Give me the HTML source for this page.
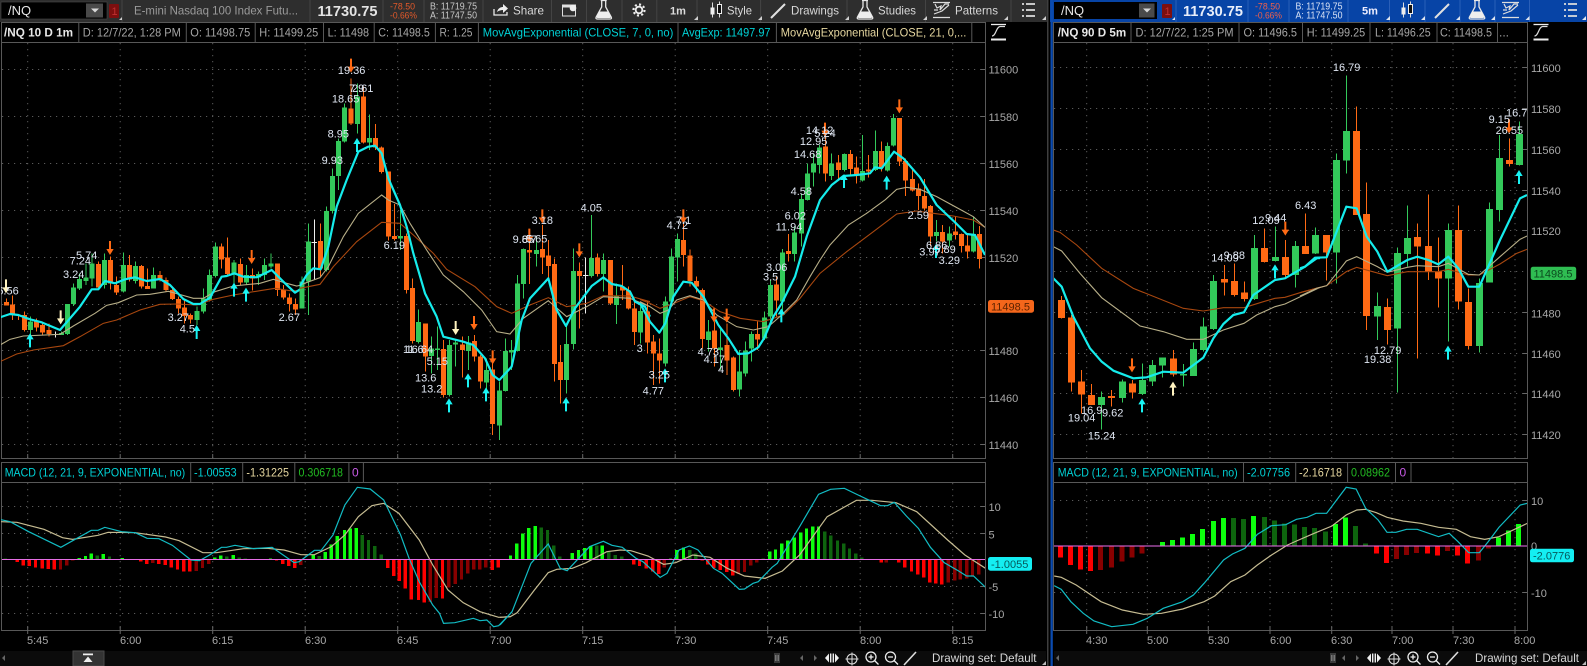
<!DOCTYPE html>
<html><head><meta charset="utf-8"><title>/NQ</title>
<style>
html,body{margin:0;padding:0;background:#000;width:1587px;height:666px;overflow:hidden}
svg{display:block;font-family:"Liberation Sans",sans-serif}
.n path,.n polyline{vector-effect:non-scaling-stroke;fill:none}
.w{stroke-width:1}.b5{stroke-width:5}.b7{stroke-width:7}
.g{stroke:#33c95a;shape-rendering:crispEdges}.o{stroke:#ff6a14;shape-rendering:crispEdges}
.h{shape-rendering:crispEdges}
.c{stroke:#15ecec;stroke-width:2.2;stroke-linejoin:round}
.t{stroke:#b8af88;stroke-width:1.1}.r{stroke:#a8470f;stroke-width:1.1}
.mc{stroke:#12bcc4;stroke-width:1.2}.mt{stroke:#c6bc92;stroke-width:1.2}
.lab{font-size:33px;fill:#dfe6f2;text-anchor:middle;dominant-baseline:central}
.ax{font-size:11px;fill:#a8a8a8}
.hd{font-size:12px;fill:#a6a6a6}
.tw{font-size:12px;fill:#d8d8d8}
</style></head><body>
<svg width="1587" height="666" viewBox="0 0 1587 666" xmlns="http://www.w3.org/2000/svg">
<defs>
<clipPath id="cl"><rect x="1" y="43" width="984" height="415"/></clipPath>
<clipPath id="cr"><rect x="1054" y="43" width="473" height="415"/></clipPath>
<clipPath id="ml"><rect x="1" y="483" width="984" height="147"/></clipPath>
<clipPath id="mr"><rect x="1054" y="483" width="473" height="147"/></clipPath>
<path id="u" d="M0 0l11 18h-8v24h-6v-24h-8z"/>
<path id="d" d="M0 0l-11-18h8v-24h6v24h8z"/>
<g id="fl"><path d="M-3-9.5h6M-2-9v6l-5.5 10q-.8 2 1 2h13q1.800 0 1-2l-5.500-10v-6" fill="none" stroke="#e8e8e8" stroke-width="1.300"/><path d="M-4.500 1.500h9l2.500 5q.3 1.500-1 1.500h-12q-1.300 0-1-1.500z" fill="#eee"/></g>
<g id="cd"><path d="M-3.500-8v15M3.500-9v16" stroke="#ddd" fill="none"/><rect x="-5.500" y="-3" width="4" height="7" fill="#eee"/><rect x="1.500" y="-6" width="4" height="9" fill="#111" stroke="#eee"/></g>
<g id="ln"><path d="M-7 7L7-7" stroke="#e0e0e0" stroke-width="2" fill="none"/></g>
<g id="pt"><path d="M-9-7.500h17M-7-6l2 4 4-2-1 4 5-6 4 0M-8 0l4 0M-8 4l8-3 7-6M-9 7.500h17" stroke="#ddd" stroke-width="1.200" fill="none"/></g>
<g id="li"><path d="M-6-6h2M-6 0h2M-6 6h2M-2-6h9M-2 0h9M-2 6h9" stroke="#ddd" stroke-width="1.800" fill="none"/></g>
<g id="ic"><path d="M-7.500-5.500h15" stroke="#eee" stroke-width="1.300" fill="none"/><path d="M-7.500 9.500h15" stroke="#eee" stroke-width="2" fill="none"/><path d="M-6.500 6c4 0 4-9 8-9.500h5" stroke="#ddd" stroke-width="1.200" fill="none"/></g>
<g id="bi"><path d="M-7 0l4-4.500v9zM7 0l-4-4.500v9z" fill="#eee"/><path d="M-1.300-4.500v9M1.300-4.500v9" stroke="#eee" stroke-width="1.400" fill="none"/><circle cx="20" cy="1" r="5" fill="none" stroke="#ddd" stroke-width="1.100"/><path d="M13.500 1h13M20-5.500v13" stroke="#ddd" fill="none"/><circle cx="39" cy="-1" r="5" fill="none" stroke="#eee" stroke-width="1.300"/><path d="M36.500-1h5M39-3.500v5M42.500 2.500l4 4" stroke="#eee" stroke-width="1.300" fill="none"/><circle cx="58.500" cy="-1" r="5" fill="none" stroke="#eee" stroke-width="1.300"/><path d="M56-1h5M62 2.500l4 4" stroke="#eee" stroke-width="1.300" fill="none"/><path d="M72 7L84-6" stroke="#ddd" stroke-width="1.600" fill="none"/></g>
</defs>

<rect width="1587" height="666" fill="#000"/>

<!-- left toolbar -->
<rect x="0" y="0" width="1047" height="22" fill="#2e2e2e"/>
<rect x="1" y="2" width="106" height="17" fill="#000" stroke="#4a4a4a" stroke-width=".6"/>
<rect x="86" y="3.500" width="17" height="14" fill="#4a4a4a"/>
<path d="M91 8.500h8l-4 4z" fill="#d8d8d8"/>
<text x="8" y="15" font-size="13" fill="#e8e8e8">/NQ</text>
<rect x="109" y="4" width="10" height="14" rx="1" fill="#7d0f0f"/>
<text x="111.500" y="15" font-size="11" fill="#c03030">1</text>
<path d="M122 0v22M310 0v22M383 0v22M424 0v22M483 0v22M551.500 0v22M586.500 0v22M622 0v22M656.800 0v22M697 0v22M760.600 0v22M847 0v22M925.500 0v22M1011 0v22" stroke="#444" fill="none"/>
<text x="134" y="14.500" font-size="12" fill="#9a9a9a" textLength="164" lengthAdjust="spacingAndGlyphs">E-mini Nasdaq 100 Index Futu...</text>
<text x="317.500" y="16" font-size="15" font-weight="bold" fill="#e4e4e4" textLength="60" lengthAdjust="spacingAndGlyphs">11730.75</text>
<text x="390" y="9.500" font-size="9.500" fill="#e2592a" textLength="25" lengthAdjust="spacingAndGlyphs">-78.50</text>
<text x="390" y="18.500" font-size="9.500" fill="#e2592a" textLength="27" lengthAdjust="spacingAndGlyphs">-0.66%</text>
<text x="430" y="9.500" font-size="10" fill="#c8c8c8" textLength="47" lengthAdjust="spacingAndGlyphs">B: 11719.75</text>
<text x="430" y="18.500" font-size="10" fill="#c8c8c8" textLength="47" lengthAdjust="spacingAndGlyphs">A: 11747.50</text>
<path d="M494 9v6h13v-3" stroke="#e8e8e8" stroke-width="1.300" fill="none"/><path d="M497 12c1-4 4-5 6-5V4l5 4.500-5 4.500v-3c-2 0-4 .5-6 2z" fill="#eee"/>
<text x="513" y="14.500" class="tw" textLength="31" lengthAdjust="spacingAndGlyphs">Share</text>
<rect x="562.500" y="5" width="13" height="11" fill="none" stroke="#e0e0e0"/><rect x="562.500" y="5" width="13" height="2.500" fill="#e0e0e0"/><circle cx="573" cy="8" r="3.300" fill="#eee"/>
<use href="#fl" x="603.700" y="10"/>
<circle cx="639" cy="10" r="5.500" fill="none" stroke="#eee" stroke-width="2.200" stroke-dasharray="2 2.300"/><circle cx="639" cy="10" r="3.300" fill="none" stroke="#eee" stroke-width="1.800"/>
<text x="670" y="14.500" font-size="11" font-weight="bold" fill="#ddd">1m</text>
<use href="#cd" x="716" y="10.500"/>
<text x="727" y="14.500" class="tw" textLength="25" lengthAdjust="spacingAndGlyphs">Style</text>
<use href="#ln" x="778" y="11"/>
<text x="791" y="14.500" class="tw" textLength="48" lengthAdjust="spacingAndGlyphs">Drawings</text>
<use href="#fl" x="865" y="10"/>
<text x="878" y="14.500" class="tw" textLength="38" lengthAdjust="spacingAndGlyphs">Studies</text>
<use href="#pt" x="942" y="10"/>
<text x="955" y="14.500" class="tw" textLength="43" lengthAdjust="spacingAndGlyphs">Patterns</text>
<use href="#li" x="1028" y="10"/>
<path d="M694 20h4v-4zM758 20h4v-4zM845 20h4v-4zM923 20h4v-4zM1004 20h4v-4zM1042 20h4v-4zM119 20h3v-3z" fill="#d0d0d0"/>

<!-- gutter -->
<rect x="1047" y="0" width="1.500" height="666" fill="#3e3e3e"/>

<!-- right toolbar -->
<rect x="1050" y="0" width="537" height="22" fill="#0744a6"/>
<rect x="1050.500" y="0" width="2.300" height="666" fill="#0b4bb0"/>
<rect x="1054" y="2" width="103" height="17" fill="#000"/>
<rect x="1139" y="3.500" width="15.500" height="14" fill="#4a4a4a"/>
<path d="M1143 8.500h8l-4 4z" fill="#d8d8d8"/>
<text x="1061" y="15" font-size="13" fill="#e8e8e8">/NQ</text>
<rect x="1162" y="4" width="10" height="14" rx="1" fill="#7d0f0f"/>
<text x="1164.500" y="15" font-size="11" fill="#c03030">1</text>
<path d="M1176 0v22M1248 0v22M1289 0v22M1348 0v22M1389.500 0v22M1425 0v22M1460 0v22M1495 0v22M1529.500 0v22" stroke="#2a5fb8" fill="none"/>
<text x="1183" y="16" font-size="15" font-weight="bold" fill="#e8eefa" textLength="60" lengthAdjust="spacingAndGlyphs">11730.75</text>
<text x="1255" y="9.500" font-size="9.500" fill="#f0604a" textLength="25" lengthAdjust="spacingAndGlyphs">-78.50</text>
<text x="1255" y="18.500" font-size="9.500" fill="#f0604a" textLength="27" lengthAdjust="spacingAndGlyphs">-0.66%</text>
<text x="1295.500" y="9.500" font-size="10" fill="#d8e2f5" textLength="47" lengthAdjust="spacingAndGlyphs">B: 11719.75</text>
<text x="1295.500" y="18.500" font-size="10" fill="#d8e2f5" textLength="47" lengthAdjust="spacingAndGlyphs">A: 11747.50</text>
<text x="1362" y="14.500" font-size="11" font-weight="bold" fill="#eef">5m</text>
<use href="#cd" x="1407" y="10.500"/>
<use href="#ln" x="1442" y="11"/>
<use href="#fl" x="1477" y="10"/>
<use href="#pt" x="1511" y="10"/>
<use href="#li" x="1570" y="10"/>
<path d="M1386 20h4v-4zM1421 20h4v-4zM1456 20h4v-4zM1491 20h4v-4zM1525.500 20h4v-4zM1582 20h4v-4zM1172 20h3v-3z" fill="#e0e6f0"/>

<!-- frames -->
<path d="M1.500 22.500H985.500V458.500H1.500zM1.500 42.500H985.500M1.500 462.500H985.500V630.500H1.500zM1.500 482.500H985.500" fill="none" stroke="#585858"/>
<path d="M1053.500 22.500H1527.500V458.500H1053.500zM1053.500 42.500H1527.500M1053.500 462.500H1527.500V630.500H1053.500zM1053.500 482.500H1527.500" fill="none" stroke="#585858"/>
<path d="M78.800 23v19M186.300 23v19M255.200 23v19M323.500 23v19M374.200 23v19M435.400 23v19M478.400 23v19M678 23v19M776.400 23v19M971.800 23v19M1131 23v19M1239 23v19M1302.500 23v19M1370 23v19M1437 23v19M1497.500 23v19M190.700 463v19M242.700 463v19M294.800 463v19M348.900 463v19M363.400 463v19M1243.500 463v19M1295.700 463v19M1347.600 463v19M1395.500 463v19M1411 463v19" stroke="#585858" fill="none"/>
<use href="#ic" x="998.500" y="30"/><use href="#ic" x="1541" y="30"/>

<!-- header text -->
<text x="4" y="36.500" font-size="12" font-weight="bold" fill="#e8e8e8" textLength="69" lengthAdjust="spacingAndGlyphs">/NQ 10 D 1m</text>
<text x="82.800" y="36.500" class="hd" textLength="98" lengthAdjust="spacingAndGlyphs">D: 12/7/22, 1:28 PM</text>
<text x="190.300" y="36.500" class="hd" textLength="60" lengthAdjust="spacingAndGlyphs">O: 11498.75</text>
<text x="259.300" y="36.500" class="hd" textLength="59" lengthAdjust="spacingAndGlyphs">H: 11499.25</text>
<text x="327.600" y="36.500" class="hd" textLength="41.500" lengthAdjust="spacingAndGlyphs">L: 11498</text>
<text x="378.300" y="36.500" class="hd" textLength="51.500" lengthAdjust="spacingAndGlyphs">C: 11498.5</text>
<text x="439.500" y="36.500" class="hd" textLength="33" lengthAdjust="spacingAndGlyphs">R: 1.25</text>
<text x="482.800" y="36.500" font-size="12" fill="#00d2d6" textLength="190.500" lengthAdjust="spacingAndGlyphs">MovAvgExponential (CLOSE, 7, 0, no)</text>
<text x="682" y="36.500" font-size="12" fill="#00d2d6" textLength="88.500" lengthAdjust="spacingAndGlyphs">AvgExp: 11497.97</text>
<text x="780.800" y="36.500" font-size="12" fill="#e6d7a0" textLength="185.500" lengthAdjust="spacingAndGlyphs">MovAvgExponential (CLOSE, 21, 0,...</text>

<text x="1057.700" y="36.500" font-size="12" font-weight="bold" fill="#e8e8e8" textLength="68.500" lengthAdjust="spacingAndGlyphs">/NQ 90 D 5m</text>
<text x="1135.500" y="36.500" class="hd" textLength="98" lengthAdjust="spacingAndGlyphs">D: 12/7/22, 1:25 PM</text>
<text x="1243.500" y="36.500" class="hd" textLength="53.500" lengthAdjust="spacingAndGlyphs">O: 11496.5</text>
<text x="1306.700" y="36.500" class="hd" textLength="58.500" lengthAdjust="spacingAndGlyphs">H: 11499.25</text>
<text x="1375" y="36.500" class="hd" textLength="55.700" lengthAdjust="spacingAndGlyphs">L: 11496.25</text>
<text x="1440" y="36.500" class="hd" textLength="52" lengthAdjust="spacingAndGlyphs">C: 11498.5</text>
<text x="1499" y="36.500" class="hd">...</text>

<text x="4.700" y="476.500" font-size="12" fill="#00d2d6" textLength="180.500" lengthAdjust="spacingAndGlyphs">MACD (12, 21, 9, EXPONENTIAL, no)</text>
<text x="194" y="476.500" font-size="12" fill="#00d2d6" textLength="42.600" lengthAdjust="spacingAndGlyphs">-1.00553</text>
<text x="246.400" y="476.500" font-size="12" fill="#e6d7a0" textLength="42.600" lengthAdjust="spacingAndGlyphs">-1.31225</text>
<text x="298.500" y="476.500" font-size="12" fill="#22bb22" textLength="44.500" lengthAdjust="spacingAndGlyphs">0.306718</text>
<text x="352" y="476.500" font-size="12" fill="#c85ae6">0</text>
<text x="1057.700" y="476.500" font-size="12" fill="#00d2d6" textLength="180" lengthAdjust="spacingAndGlyphs">MACD (12, 21, 9, EXPONENTIAL, no)</text>
<text x="1247" y="476.500" font-size="12" fill="#00d2d6" textLength="43" lengthAdjust="spacingAndGlyphs">-2.07756</text>
<text x="1299" y="476.500" font-size="12" fill="#e6d7a0" textLength="43" lengthAdjust="spacingAndGlyphs">-2.16718</text>
<text x="1351" y="476.500" font-size="12" fill="#22bb22" textLength="39" lengthAdjust="spacingAndGlyphs">0.08962</text>
<text x="1399.500" y="476.500" font-size="12" fill="#c85ae6">0</text>

<!-- grids -->
<path d="M2 69.500H985M2 116.500H985M2 163.500H985M2 210.500H985M2 257.500H985M2 304.500H985M2 350.500H985M2 397.500H985M2 444.500H985M27.700 43V458M120.200 43V458M212.700 43V458M305.200 43V458M397.700 43V458M490.200 43V458M582.700 43V458M675.200 43V458M767.700 43V458M860.200 43V458M952.700 43V458" stroke="#5a5a5a" stroke-dasharray="1.200 4.800" fill="none"/>
<path d="M2 506.500H985M2 533.500H985M2 586.500H985M2 613.500H985M27.700 483V630M120.200 483V630M212.700 483V630M305.200 483V630M397.700 483V630M490.200 483V630M582.700 483V630M675.200 483V630M767.700 483V630M860.200 483V630M952.700 483V630" stroke="#5a5a5a" stroke-dasharray="1.200 4.800" fill="none"/>
<path d="M1054 67.500H1527M1054 108.500H1527M1054 149.500H1527M1054 190.500H1527M1054 230.500H1527M1054 271.500H1527M1054 312.500H1527M1054 353.500H1527M1054 393.500H1527M1054 434.500H1527M1086.700 43V458M1147.300 43V458M1208.300 43V458M1270 43V458M1331.700 43V458M1392 43V458M1453 43V458M1515 43V458" stroke="#5a5a5a" stroke-dasharray="1.200 4.800" fill="none"/>
<path d="M1054 500.500H1527M1054 592.500H1527M1086.700 483V630M1147.300 483V630M1208.300 483V630M1270 483V630M1331.700 483V630M1392 483V630M1453 483V630M1515 483V630" stroke="#5a5a5a" stroke-dasharray="1.200 4.800" fill="none"/>
<path d="M27.700 454v4M120.200 454v4M212.700 454v4M305.200 454v4M397.700 454v4M490.200 454v4M582.700 454v4M675.200 454v4M767.700 454v4M860.200 454v4M952.700 454v4M27.700 626v8M120.200 626v8M212.700 626v8M305.200 626v8M397.700 626v8M490.200 626v8M582.700 626v8M675.200 626v8M767.700 626v8M860.200 626v8M952.700 626v8M1086.700 626v8M1147.300 626v8M1208.300 626v8M1270 626v8M1331.700 626v8M1392 626v8M1453 626v8M1515 626v8M981 69.500h4M981 116.500h4M981 163.500h4M981 210.500h4M981 257.500h4M981 350.500h4M981 397.500h4M981 444.500h4M981 506.500h4M981 533.500h4M981 586.500h4M981 613.500h4M1523 67.500h4M1523 108.500h4M1523 149.500h4M1523 190.500h4M1523 230.500h4M1523 312.500h4M1523 353.500h4M1523 393.500h4M1523 434.500h4M1523 500.500h4M1523 592.500h4" stroke="#666" fill="none"/>

<!-- LEFT main -->
<g clip-path="url(#cl)">
<g class="n" transform="translate(0 200) scale(.33333)">
<path class="g w" d="M91 350V410M184 395V405M203 312V405M221 250V318M239 220V270M258 190V255M276 160V260M313 160V265M370 157V278M406 185V250M461 202V255M591 320V375M610 265V340M628 208V305M647 128V232M702 180V250M739 195V255M776 215V255M794 175V240M813 160V205"/>
<path class="g b5" d="M91 365V390M184 399V405M203 312V402M221 262V312M239 237V265M258 232V243M276 190V235M313 180V255M370 195V275M406 198V243M461 225V265M591 333V360M610 295V335M628 225V300M647 140V228M702 188V222M739 225V247M776 222V232M794 195V225M813 190V200"/>
<path class="o w" d="M19 295V317M37 287V360M55 345V360M73 335V395M110 355V395M128 365V405M147 370V410M295 185V268M331 170V268M349 230V285M388 165V245M425 195V265M443 205V267M480 213V245M498 232V275M517 260V300M535 290V340M553 300V370M571 340V370M665 130V205M683 112V225M721 175V255M757 205V272M832 190V288M850 255V298M868 280V335M887 295V345"/>
<path class="o b5" d="M19 306V317M37 314V340M73 345V390M110 362V382M128 375V397M147 390V402M295 192V262M331 180V250M349 255V278M388 195V238M425 198V260M443 258V267M480 225V240M498 240V270M517 270V297M535 297V325M553 322V348M571 345V358M665 140V178M683 172V222M721 192V248M757 225V235M832 190V270M850 268V293M868 292V312M887 312V328"/>
<path class="h" d="M166 395V412M158 403H174" stroke="#eee"/>
<path class="r" d="M0 485L50 462 100 450 190 437 240 410 310 370 350 360 420 330 480 313 530 312 590 315 640 298 700 285 780 272 825 265 870 272 900 272"/>
<path class="t" d="M0 435L30 418 70 408 180 403 220 378 285 340 320 316 355 308 410 285 450 283 505 274 545 285 580 295 610 295 645 275 700 258 780 250 820 238 860 250 890 258 905 255"/>
<path class="c" d="M0 352L30 342 55 345 90 358 125 367 180 390 240 320 275 268 295 268 315 243 345 250 375 238 405 232 440 243 480 237 510 255 550 297 580 312 600 312 630 293 665 230 680 228 703 220 730 230 770 232 815 210 855 250 885 278 905 265"/>
</g>
<g class="n" transform="translate(300 50) scale(.33333)">
<path class="g w" d="M6 680V775M25 520V795M79 470V665M97 355V490M115 265V420M134 160V278M172 100V250M208 193V300M302 480V600M355 778V880M394 860V970M412 830V960M448 870V1040M466 870V950M505 858V960M559 925V1020M598 995V1170M617 865V1025M635 870V960M652 675V905M670 595V745M710 560V650M799 825V1030M820 595V898M875 495V682M910 610V725M949 700V822M1022 770V880"/>
<path class="g b5" d="M6 695V775M25 575V695M79 483V660M97 378V483M115 273V378M134 173V275M172 140V222M208 264V278M302 558V565M355 816V876M394 895V918M412 895V900M448 885V1035M466 878V884M505 878V903M559 960V997M598 1022V1127M617 903V1023M635 900V908M652 700V903M670 597V702M710 600V612M799 882V990M820 663V882M875 624V678M910 630V672M949 738V765M1022 783V848"/>
<path class="o w" d="M61 520V680M153 85V225M190 110V280M227 222V300M245 290V370M265 364V572M283 462V572M320 550V730M338 685V880M376 820V965M431 870V1042M487 860V982M523 855V935M541 915V1015M578 935V1155M688 548V702M727 525V672M745 570V690M763 625V995M782 885V1060M838 637V835M892 610V680M932 630V765M968 645V750M986 710V778M1004 745V885"/>
<path class="o b5" d="M61 573V655M153 175V220M190 140V278M227 264V292M245 292V366M265 364V560M283 558V567M320 558V720M338 714V873M376 820V920M431 897V1035M487 884V900M523 873V920M541 920V995M578 958V1122M688 600V608M727 597V622M745 616V648M763 642V942M782 936V990M838 663V678M892 622V672M932 630V760M968 710V722M986 722V776M1004 775V846"/>
<path class="h" d="M43 508V690M35 577H51M857 622V790M849 677H865" stroke="#eee"/>
<path class="r" d="M0 715L60 703 100 650 170 575 245 517 300 520 340 555 400 610 440 658 525 710 590 770 635 790 690 765 745 743 800 770 860 760 910 737 990 738 1050 755"/>
<path class="t" d="M0 705L60 683 85 650 130 560 175 490 245 435 265 450 300 465 330 520 380 600 430 675 490 725 545 780 590 845 630 852 670 805 745 752 800 800 860 770 910 740 990 745 1050 770"/>
<path class="c" d="M0 708L20 675 40 655 62 658 85 590 110 470 140 390 175 305 205 290 225 287 245 310 265 385 300 465 320 530 340 610 375 730 410 800 430 860 490 875 520 885 555 925 578 975 598 990 635 950 665 810 690 745 745 685 770 780 798 828 825 775 875 708 910 682 935 702 965 708 990 725 1005 755 1035 770 1050 800"/>
</g>
<g class="n" transform="translate(640 90) scale(.33333)">
<path class="g w" d="M76 620V830M94 475V640M112 430V575M205 690V785M241 715V840M298 780V920M316 755V860M334 725V815M373 665V750M391 570V695M427 477V670M463 410V515M484 310V470M502 220V332M520 190V290M538 165V250M574 190V270M613 190V245M668 135V275M706 122V243M742 158V245M761 72V170M889 390V455M928 410V470M1001 380V487"/>
<path class="g b5" d="M76 635V820M94 500V635M112 447V503M205 725V750M241 772V780M298 845V898M316 782V850M334 732V775M373 682V745M391 585V680M427 487V635M463 427V492M484 327V430M502 250V330M520 220V248M538 172V225M574 220V258M613 192V240M668 243V272M706 183V240M742 168V242M761 84V167M889 426V438M928 430V452M1001 432V484"/>
<path class="o w" d="M22 635V790M40 735V885M58 745V880M130 380V530M150 478V590M169 560V608M187 595V775M223 695V830M261 700V855M280 800V905M352 695V780M409 560V680M445 432V515M556 100V275M595 195V270M632 180V255M650 200V280M686 195V262M724 155V245M778 84V228M796 205V318M817 240V305M835 280V360M853 267V362M871 345V468M907 405V490M946 378V448M964 430V488M982 435V505M1019 408V535"/>
<path class="o b5" d="M22 665V758M40 755V790M58 790V812M130 450V495M150 497V573M169 573V590M187 600V747M223 722V775M261 765V812M280 803V900M352 732V748M409 583V632M445 483V492M556 170V250M595 217V240M632 192V237M650 232V255M686 238V245M724 183V232M778 84V215M796 213V272M817 267V302M835 295V318M853 318V356M871 348V440M907 426V455M946 425V435M964 432V468M982 467V484M1019 432V507"/>
<path class="r" d="M0 628L30 640 60 655 90 645 150 620 190 632 240 665 300 685 370 695 430 675 480 625 540 550 620 485 700 425 770 372 830 363 880 370 940 378 1000 390 1035 412"/>
<path class="t" d="M0 635L30 650 60 670 85 660 110 630 150 617 190 630 230 675 290 710 340 720 385 710 425 675 470 630 510 560 540 510 570 465 625 405 680 370 735 330 770 298 800 292 840 298 890 320 945 350 1000 380 1035 412"/>
<path class="c" d="M0 640L30 695 58 728 76 700 100 620 130 575 155 578 190 620 235 705 265 745 295 792 325 790 355 772 372 745 400 680 425 640 465 560 500 440 540 330 575 285 610 258 650 255 690 250 705 232 725 235 762 185 790 205 840 262 890 345 945 397 980 432 1005 435 1035 495"/>
</g>
<g transform="translate(0 200) scale(.33333)">
<use href="#d" x="18" y="280" fill="#fff3c0"/><use href="#d" x="182" y="373" fill="#fff3c0"/><use href="#d" x="330" y="165" fill="#ff6a14"/><use href="#d" x="755" y="192" fill="#ff6a14"/>
<use href="#u" x="90" y="400" fill="#19f4f4"/><use href="#u" x="590" y="375" fill="#19f4f4"/><use href="#u" x="702" y="248" fill="#19f4f4"/><use href="#u" x="738" y="263" fill="#19f4f4"/>
<text class="lab" x="24" y="274">6.56</text><text class="lab" x="260" y="168">5.74</text><text class="lab" x="241" y="184">7.24</text><text class="lab" x="221" y="225">3.24</text><text class="lab" x="535" y="354">3.27</text><text class="lab" x="562" y="388">4.5</text><text class="lab" x="868" y="354">2.67</text>
</g>
<g transform="translate(300 50) scale(.33333)">
<use href="#d" x="153" y="68" fill="#ff6a14"/><use href="#d" x="467" y="855" fill="#fff3c0"/><use href="#d" x="522" y="840" fill="#ff6a14"/><use href="#d" x="578" y="943" fill="#ff6a14"/><use href="#d" x="727" y="520" fill="#ff6a14"/><use href="#d" x="688" y="578" fill="#ff6a14"/><use href="#d" x="838" y="622" fill="#ff6a14"/>
<use href="#u" x="171" y="264" fill="#19f4f4"/><use href="#u" x="447" y="1045" fill="#19f4f4"/><use href="#u" x="504" y="970" fill="#19f4f4"/><use href="#u" x="558" y="1012" fill="#19f4f4"/><use href="#u" x="798" y="1042" fill="#19f4f4"/>
<text class="lab" x="155" y="63">19.36</text><text class="lab" x="170" y="117">7.9</text><text class="lab" x="188" y="117">2.61</text><text class="lab" x="137" y="148">18.65</text><text class="lab" x="115" y="253">8.95</text><text class="lab" x="97" y="333">9.93</text><text class="lab" x="283" y="588">6.19</text><text class="lab" x="340" y="900">11.6</text><text class="lab" x="358" y="900">16.64</text><text class="lab" x="412" y="936">5.15</text><text class="lab" x="377" y="985">13.6</text><text class="lab" x="395" y="1018">13.2</text><text class="lab" x="727" y="513">3.18</text><text class="lab" x="874" y="475">4.05</text><text class="lab" x="670" y="570">9.85</text><text class="lab" x="688" y="570">6.7</text><text class="lab" x="710" y="568">5.65</text><text class="lab" x="1019" y="897">3</text>
</g>
<g transform="translate(640 90) scale(.33333)">
<use href="#d" x="130" y="400" fill="#ff6a14"/><use href="#d" x="222" y="697" fill="#ff6a14"/><use href="#d" x="260" y="698" fill="#ff6a14"/><use href="#d" x="555" y="140" fill="#ff6a14"/><use href="#d" x="778" y="70" fill="#ff6a14"/>
<use href="#u" x="75" y="835" fill="#19f4f4"/><use href="#u" x="424" y="655" fill="#19f4f4"/><use href="#u" x="612" y="252" fill="#19f4f4"/><use href="#u" x="740" y="257" fill="#19f4f4"/><use href="#u" x="888" y="462" fill="#19f4f4"/>
<text class="lab" x="112" y="408">4.72</text><text class="lab" x="131" y="393">7.1</text><text class="lab" x="58" y="857">3.25</text><text class="lab" x="40" y="905">4.77</text><text class="lab" x="205" y="787">4.73</text><text class="lab" x="223" y="810">4.17</text><text class="lab" x="243" y="840">4</text><text class="lab" x="392" y="562">3.5</text><text class="lab" x="410" y="534">3.06</text><text class="lab" x="447" y="412">11.94</text><text class="lab" x="466" y="380">6.02</text><text class="lab" x="484" y="306">4.58</text><text class="lab" x="503" y="195">14.68</text><text class="lab" x="521" y="156">12.95</text><text class="lab" x="539" y="123">14.12</text><text class="lab" x="555" y="132">5.24</text><text class="lab" x="835" y="378">2.59</text><text class="lab" x="890" y="468">6.86</text><text class="lab" x="870" y="487">3.97</text><text class="lab" x="915" y="480">5.89</text><text class="lab" x="928" y="513">3.29</text>
</g>
</g>

<!-- RIGHT main -->
<g clip-path="url(#cr)">
<g class="n" transform="translate(1040 60) scale(.33333)">
<path class="g w" d="M184 995V1108M247 958V1028M307 910V1005M338 900V978M368 892V952M430 912V980M460 848V948M490 772V875M520 645V810M643 525V720M706 500V605M766 543V682"/>
<path class="g b7" d="M184 1011V1035M247 965V1014M307 960V1002M338 915V965M368 892V917M430 942V947M460 867V948M490 800V870M520 663V807M643 564V717M706 591V603M766 558V645"/>
<path class="o w" d="M64 708V776M94 765V995M124 930V1060M154 972V1035M214 990V1040M277 960V1015M400 870V950M553 615V707M583 610V710M613 665V725M673 505V608M736 540V652"/>
<path class="o b7" d="M64 720V774M94 772V968M124 964V1004M154 1005V1035M214 1008V1014M277 970V998M400 895V944M553 657V668M583 663V705M613 698V717M673 564V606M736 591V645"/>
<path class="r" d="M40 510L60 517 110 555 185 625 280 685 430 745 490 753 550 743 612 743 670 725 705 715 735 712 790 695 840 682"/>
<path class="t" d="M40 560L65 573 120 640 185 713 300 798 370 815 440 838 490 838 550 810 612 790 650 765 705 740 735 732 840 682"/>
<path class="c" d="M40 655L65 680 100 770 150 865 185 905 220 932 280 955 320 952 370 935 430 938 490 893 520 835 550 792 580 765 612 757 640 705 705 660 735 655 795 620 830 595 840 594"/>
</g>
<g class="n" transform="translate(1300 60) scale(.33333)">
<path class="g w" d="M47 503V582M109 280V670M139 47V340M232 698V840M292 562V997M322 437V620M445 490V845M538 655V878M568 428V668M598 225V485M658 185V316"/>
<path class="g b7" d="M47 525V580M109 300V578M139 213V302M232 738V770M292 579V806M322 534V582M445 510V656M538 669V858M568 447V668M598 294V450M658 222V315"/>
<path class="o w" d="M16 460V582M79 525V662M170 140V465M200 368V810M262 715V853M352 490V895M385 403V660M415 533V742M475 436V748M505 685V868M628 235V320"/>
<path class="o b7" d="M16 558V582M79 525V578M170 213V465M200 462V768M262 741V810M352 531V560M385 558V635M415 635V656M475 510V725M505 726V858M628 300V312"/>
<path class="r" d="M0 698L50 685 80 677 139 635 170 622 262 647 322 635 415 635 445 628 505 645 538 645 600 612 650 580 681 568"/>
<path class="t" d="M0 708L50 685 80 677 110 640 139 603 170 590 232 620 262 637 322 622 352 617 415 620 445 610 505 643 538 645 600 590 660 538 681 528"/>
<path class="c" d="M0 625L15 620 45 593 80 592 139 440 170 445 200 530 232 575 262 635 322 600 352 590 385 600 415 613 445 590 475 625 505 680 538 680 600 540 660 415 681 405"/>
</g>
<g transform="translate(1040 60) scale(.33333)">
<use href="#d" x="276" y="937" fill="#ff6a14"/><use href="#d" x="736" y="527" fill="#ff6a14"/>
<use href="#u" x="306" y="1015" fill="#19f4f4"/><use href="#u" x="705" y="613" fill="#19f4f4"/><use href="#u" x="399" y="965" fill="#fff3c0"/>
<text class="lab" x="125" y="1075">19.04</text><text class="lab" x="155" y="1053">16.9</text><text class="lab" x="218" y="1060">9.62</text><text class="lab" x="185" y="1129">15.24</text><text class="lab" x="555" y="595">14.09</text><text class="lab" x="583" y="588">9.88</text><text class="lab" x="678" y="483">12.09</text><text class="lab" x="707" y="476">9.44</text><text class="lab" x="797" y="438">6.43</text>
</g>
<g transform="translate(1300 60) scale(.33333)">
<use href="#d" x="627" y="220" fill="#ff6a14"/><use href="#u" x="444" y="857" fill="#19f4f4"/><use href="#u" x="657" y="330" fill="#19f4f4"/>
<text class="lab" x="140" y="24">16.79</text><text class="lab" x="263" y="873">12.79</text><text class="lab" x="233" y="900">19.38</text><text class="lab" x="598" y="180">9.15</text><text class="lab" x="628" y="213">26.55</text><text class="lab" x="650" y="161">16.7</text>
</g>
</g>

<!-- LEFT MACD -->
<g clip-path="url(#ml)">
<g class="n" transform="translate(0 440) scale(.33807 .33333)">
<path class="h" stroke="#ff0000" stroke-width="3.400" d="M51 358V366M69 358V376M87 358V378M105 358V382M125 358V385M143 358V387M161 358V388M416 358V364M434 358V372M470 358V372M489 358V375M507 358V382M525 358V388M543 358V394M561 358V394M818 358V362M836 358V372M854 358V378M872 358V384M1147 358V384M1165 358V408M1181 358V423M1199 358V446M1217 358V478M1238 358V480M1255 358V488M1309 358V476M1456 358V390M1474 358V382"/>
<path class="h" stroke="#880000" stroke-width="3.400" d="M179 358V388M197 358V376M215 358V362M452 358V369M581 358V393M599 358V384M617 358V372M890 358V375M1273 358V486M1291 358V474M1327 358V443M1347 358V432M1365 358V418M1383 358V400M1401 358V388M1419 358V388M1437 358V382"/>
<path class="h" stroke="#0dff0d" stroke-width="3.400" d="M235 358V354M253 358V348M270 358V340M306 358V342M362 358V354M635 358V352M653 358V346M690 358V345M800 358V355M926 358V344M962 358V336M980 358V313M998 358V288M1019 358V270M1036 358V266M1054 358V264M1510 358V347M1528 358V310M1546 358V280M1564 358V264"/>
<path class="h" stroke="#0e640e" stroke-width="3.400" d="M15 358V356M288 358V346M324 358V349M671 358V349M708 358V352M726 358V356M944 358V348M1072 358V285M1090 358V300M1108 358V318M1128 358V344"/>
<path class="mt" d="M3 245L50 247 130 268 185 293 215 298 290 286 320 277 400 278 490 291 530 302 600 338 640 338 720 326 790 325 840 330 890 344 930 344 980 320 1020 285 1060 230 1100 197 1135 190 1180 220 1240 300 1280 375 1325 450 1370 488 1420 515 1475 532 1510 530"/>
<path class="mc" d="M3 239L30 245 85 275 180 322 270 271 290 271 310 262 360 275 400 278 435 295 470 296 510 316 565 360 590 362 620 345 655 322 670 322 695 316 750 326 805 322 870 368 885 365 930 331 950 331 985 285 1020 195 1057 142 1095 147 1135 180 1185 285 1210 355 1240 425 1280 495 1300 520 1312 550 1345 548 1400 535 1420 542 1440 540 1460 560 1475 557 1515 515"/>
</g>
<g class="n" transform="translate(500 440) scale(.34436 .33333)">
<path class="h" stroke="#0dff0d" stroke-width="3.400" d="M48 358V310M66 358V280M83 358V265M102 358V258M210 358V339M228 358V330M246 358V324M263 358V318M297 358V316M513 358V330M533 358V323M783 358V334M800 358V328M818 358V310M836 358V302M855 358V293M873 358V278M890 358V266M908 358V260M925 358V260"/>
<path class="h" stroke="#0e640e" stroke-width="3.400" d="M120 358V262M138 358V270M156 358V316M173 358V349M281 358V316M316 358V336M335 358V345M353 358V350M495 358V354M551 358V330M569 358V340M765 358V355M943 358V274M960 358V286M980 358V302M998 358V311M1015 358V325M1033 358V341M1050 358V353"/>
<path class="h" stroke="#ff0000" stroke-width="3.400" d="M388 358V374M405 358V378M425 358V386M443 358V394M461 358V402M587 358V361M603 358V374M621 358V384M640 358V390M658 358V396M676 358V406M1107 358V368M1158 358V368M1175 358V383M1195 358V395M1213 358V404M1230 358V413M1248 358V428M1265 358V430M1283 358V434"/>
<path class="h" stroke="#880000" stroke-width="3.400" d="M477 358V383M692 358V402M710 358V396M728 358V376M746 358V368M1122 358V368M1302 358V428M1320 358V422M1337 358V418M1355 358V416M1372 358V408M1390 358V404"/>
<path class="mt" d="M0 532L30 530 50 518 100 450 140 398 165 388 210 385 250 368 310 335 350 330 380 332 430 348 475 373 510 368 560 345 610 352 660 385 710 408 770 415 820 393 870 345 950 230 1035 181 1080 181 1150 188 1210 215 1300 300 1350 345 1410 385"/>
<path class="mc" d="M0 555L35 515 90 370 140 312 175 385 195 392 260 320 300 304 325 316 355 322 395 355 415 365 465 412 485 400 520 330 550 318 575 330 620 385 645 400 695 448 710 447 735 430 750 425 790 382 805 370 870 260 925 163 960 148 1000 145 1040 165 1075 182 1105 197 1125 197 1145 187 1180 228 1215 265 1250 322 1290 368 1330 392 1355 408 1375 408 1410 442"/>
</g>
<path class="h" d="M2 559.500H985" stroke="#e46ee4" stroke-width="1"/>
</g>

<!-- RIGHT MACD -->
<g clip-path="url(#mr)">
<g class="n" transform="translate(1030 440) scale(.35524 .33333)">
<path class="h" stroke="#ff0000" stroke-width="5" d="M86 318V353M114 318V375M142 318V388M170 318V393M975 318V341M1004 318V369M1119 318V341M1147 318V347M1203 318V347M1232 318V371"/>
<path class="h" stroke="#880000" stroke-width="5" d="M198 318V390M229 318V382M259 318V365M287 318V353M315 318V340M343 318V320M1032 318V357M1060 318V345M1088 318V339M1175 318V333M1263 318V362M1291 318V326"/>
<path class="h" stroke="#0dff0d" stroke-width="5" d="M373 318V306M401 318V300M429 318V293M457 318V282M486 318V267M517 318V243M545 318V234M629 318V228M860 318V252M888 318V233M1319 318V292M1347 318V271M1375 318V252"/>
<path class="h" stroke="#0e640e" stroke-width="5" d="M573 318V234M601 318V237M660 318V231M688 318V241M716 318V251M745 318V253M773 318V261M801 318V264M832 318V274M916 318V258M944 318V310"/>
<path class="mt" d="M68 408L88 412 130 435 200 485 260 510 320 523 370 520 430 507 490 485 520 468 565 425 605 405 640 375 680 345 725 315 750 303 800 280 850 258 890 225 920 210 945 208 975 218 1005 232 1050 243 1100 250 1150 262 1200 268 1240 290 1280 298 1320 290 1400 250"/>
<path class="mc" d="M68 437L88 448 115 485 150 520 180 543 230 560 290 553 330 535 375 505 430 485 460 465 490 430 545 360 570 342 605 325 640 283 680 257 720 254 750 238 780 232 805 220 835 220 890 142 918 147 945 205 980 240 1005 277 1030 277 1060 268 1090 268 1150 290 1180 280 1205 305 1235 338 1265 338 1290 305 1320 262 1380 195 1400 190"/>
</g>
<path class="h" d="M1054 546H1527" stroke="#ee70ee" stroke-width="1"/>
</g>

<!-- axis labels -->
<g class="ax">
<text x="988.500" y="73.500">11600</text><text x="988.500" y="121">11580</text><text x="988.500" y="168">11560</text><text x="988.500" y="215">11540</text><text x="988.500" y="262">11520</text><text x="988.500" y="355">11480</text><text x="988.500" y="402">11460</text><text x="988.500" y="449">11440</text>
<text x="988.500" y="511">10</text><text x="988.500" y="538.500">5</text><text x="988.500" y="591">-5</text><text x="988.500" y="618">-10</text>
<text x="1531" y="72">11600</text><text x="1531" y="113">11580</text><text x="1531" y="154">11560</text><text x="1531" y="195">11540</text><text x="1531" y="235">11520</text><text x="1531" y="317.500">11480</text><text x="1531" y="358">11460</text><text x="1531" y="398">11440</text><text x="1531" y="439">11420</text>
<text x="1531" y="505">10</text><text x="1531" y="597">-10</text><text x="1531" y="550">0</text>
<text x="27" y="644">5:45</text><text x="120" y="644">6:00</text><text x="212" y="644">6:15</text><text x="305" y="644">6:30</text><text x="397" y="644">6:45</text><text x="490" y="644">7:00</text><text x="582" y="644">7:15</text><text x="675" y="644">7:30</text><text x="767" y="644">7:45</text><text x="860" y="644">8:00</text><text x="952" y="644">8:15</text>
<text x="1086" y="644">4:30</text><text x="1147" y="644">5:00</text><text x="1208" y="644">5:30</text><text x="1270" y="644">6:00</text><text x="1331" y="644">6:30</text><text x="1392" y="644">7:00</text><text x="1453" y="644">7:30</text><text x="1514" y="644">8:00</text>
</g>
<rect x="988" y="300" width="46" height="12.700" rx="2.500" fill="#f4661b"/>
<text x="991" y="310.500" font-size="11" fill="#5c2300">11498.5</text>
<rect x="1530.700" y="266.700" width="45.500" height="13.300" rx="2.500" fill="#2fbd52"/>
<text x="1533.500" y="277.500" font-size="11" fill="#0b4a1e">11498.5</text>
<rect x="988" y="557" width="44" height="13.700" rx="2.500" fill="#14eef2"/>
<text x="991" y="568" font-size="11" fill="#05595c">-1.0055</text>
<rect x="1530" y="548.700" width="44" height="13.600" rx="2.500" fill="#14eef2"/>
<text x="1533" y="559.500" font-size="11" fill="#05595c">-2.0776</text>

<!-- bottom strip -->
<rect x="0" y="651" width="1046" height="15" fill="#0b0b0b"/>
<rect x="1054" y="651" width="533" height="15" fill="#0b0b0b"/>
<rect x="73" y="651" width="31" height="15" fill="#333" stroke="#4a4a4a"/>
<path d="M83 653.500h10v1.800h-10zM83.500 662l4.500-5.500 4.500 5.500z" fill="#eee"/>
<path d="M5 655l-3 3 3 3zM1059 655l-3 3 3 3z" fill="#666"/>
<rect x="774" y="653" width="6" height="10" fill="#3a3a3a"/><path d="M775.500 655v6M777 655v6M778.500 655v6" stroke="#777" fill="none"/>
<path d="M803 655l-3 3 3 3zM814 655l3 3-3 3z" fill="#666"/>
<rect x="1330" y="653" width="6" height="10" fill="#3a3a3a"/><path d="M1331.500 655v6M1333 655v6M1334.500 655v6" stroke="#777" fill="none"/>
<path d="M1345 655l-3 3 3 3zM1356 655l3 3-3 3z" fill="#666"/>
<use href="#bi" x="832" y="658"/>
<use href="#bi" x="1374" y="658"/>
<text x="932" y="662" font-size="12" fill="#d8d8d8" textLength="104.500" lengthAdjust="spacingAndGlyphs">Drawing set: Default</text>
<text x="1475" y="662" font-size="12" fill="#d8d8d8" textLength="104" lengthAdjust="spacingAndGlyphs">Drawing set: Default</text>
<path d="M1042 665h4v-4zM1582 665h4v-4z" fill="#bbb"/>
</svg>
</body></html>
